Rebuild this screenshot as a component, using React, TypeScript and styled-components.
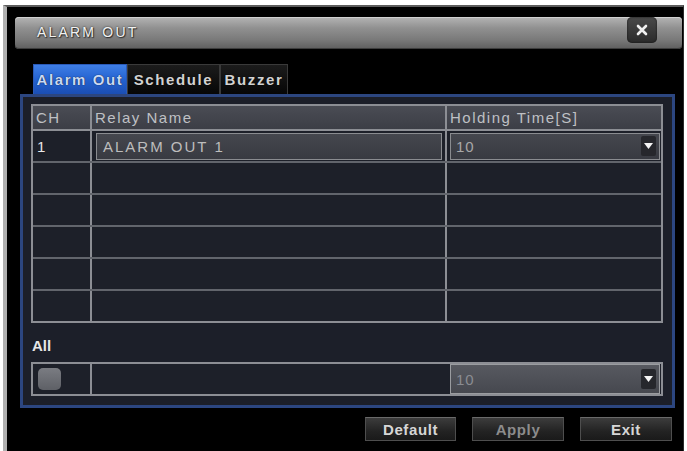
import React from "react";
import styled, { createGlobalStyle } from "styled-components";

const Global = createGlobalStyle`
  html, body { margin: 0; padding: 0; background: #ffffff; }
  body { width: 687px; height: 451px; overflow: hidden; font-family: "Liberation Sans", Arial, sans-serif; }
  * { box-sizing: border-box; }
`;

const Page = styled.div`
  width: 687px;
  height: 451px;
  padding: 5px 3px 0 3px;
`;

const Window = styled.div`
  height: 446px;
  background: #000;
  border-top: 2px solid #5c5c5c;
  border-left: 4px solid #b0b0b0;
  border-right: 1px solid #2a2a2a;
  padding: 10px 1px 0 8px;
  display: flex;
  flex-direction: column;
`;

const TitleBar = styled.div`
  height: 32px;
  border-radius: 4px;
  display: flex;
  align-items: center;
  padding-left: 22px;
  background: linear-gradient(#b4b4b4 0%, #909090 35%, #7a7a7a 70%, #5e5e5e 100%);
  box-shadow: inset 0 1px 0 #d0d0d0, inset 0 -1px 0 #3c3c3c;
`;

const Title = styled.span`
  font-size: 14px;
  letter-spacing: 2.2px;
  color: #f2f2f2;
  text-shadow: 0 0 2px #222, 1px 1px 1px #333;
  margin-top: -3px;
`;

const CloseButton = styled.div`
  margin-left: auto;
  margin-right: 25px;
  align-self: flex-start;
  margin-top: 0px;
  width: 30px;
  height: 26px;
  border-radius: 5px;
  background: linear-gradient(#4a4a4a, #2a2a2a);
  display: flex;
  align-items: center;
  justify-content: center;
  box-shadow: inset 0 0 2px #111;
`;

const Body = styled.div`
  margin-top: 15px;
  padding: 0 7px 0 5px;
  display: flex;
  flex-direction: column;
`;

const Tabs = styled.div`
  display: flex;
  margin-left: 13px;
  height: 30px;
`;

const Tab = styled.div<{ $w: number; $active?: boolean }>`
  width: ${(p) => p.$w}px;
  height: 30px;
  display: flex;
  align-items: center;
  justify-content: center;
  font-size: 15px;
  font-weight: bold;
  letter-spacing: 1.6px;
  color: ${(p) => (p.$active ? "#c9d9f6" : "#d2d2d2")};
  background: ${(p) =>
    p.$active
      ? "linear-gradient(#3f7fe6 0%, #2462d0 50%, #1b4eb4 100%)"
      : "linear-gradient(#1c1c1c, #060606)"};
  border: 1px solid ${(p) => (p.$active ? "#2a5ab8" : "#3a3a3a")};
  border-bottom: none;
  text-shadow: 0 0 1px #000;
`;

const Panel = styled.div`
  height: 314px;
  border: 3px solid #2c4680;
  background: #1c1f29;
  padding: 7px 9px 0 8px;
  display: flex;
  flex-direction: column;
`;

const Table = styled.div`
  border: 2px solid #8c8e94;
  display: flex;
  flex-direction: column;
`;

const Row = styled.div<{ $h: number; $head?: boolean; $last?: boolean }>`
  display: flex;
  height: ${(p) => p.$h + (p.$last ? 0 : 2)}px;
  border-bottom: ${(p) => (p.$last ? "none" : p.$head ? "2px solid #8c8e94" : "2px solid #62656c")};
  background: ${(p) => (p.$head ? "linear-gradient(#4a4c54, #3c3e46)" : "#1d2029")};
`;

const Cell = styled.div<{ $w?: number; $divider?: boolean }>`
  ${(p) => (p.$w ? `width: ${p.$w}px; flex: none;` : "flex: 1;")}
  border-right: ${(p) => (p.$divider ? "2px solid #8c8e94" : "none")};
  display: flex;
  align-items: center;
  padding-left: 3px;
  font-size: 15px;
  letter-spacing: 1.4px;
  color: #c4c4c4;
  min-width: 0;
`;

const HeadText = styled.span`
  color: #bfc0c4;
  letter-spacing: 1.5px;
`;

const CellText = styled.span`
  color: #e8e8e8;
  padding-left: 1px;
`;

const NameInput = styled.div`
  flex: 1;
  height: 27px;
  margin: 0 3px 0 1px;
  border: 1px solid #8a8c90;
  background: linear-gradient(#45474e, #383a41);
  display: flex;
  align-items: center;
  padding-left: 6px;
  font-size: 15px;
  letter-spacing: 2px;
  color: #bdbdbd;
`;

const Select = styled.div<{ $dim?: boolean }>`
  flex: 1;
  height: ${(p) => (p.$dim ? 30 : 27)}px;
  margin: 0 1px 0 0;
  border: 1px solid ${(p) => (p.$dim ? "#9a9ca0" : "#8a8c90")};
  background: ${(p) => (p.$dim ? "linear-gradient(#575960, #46484f)" : "linear-gradient(#45474e, #383a41)")};
  display: flex;
  align-items: center;
  padding-left: 5px;
  padding-right: 3px;
  font-size: 15px;
  letter-spacing: 1px;
  color: ${(p) => (p.$dim ? "#8a8c92" : "#a8a8a8")};
`;

const Arrow = styled.div`
  margin-left: auto;
  width: 15px;
  height: 20px;
  border-radius: 2px;
  background: #26272c;
  display: flex;
  align-items: center;
  justify-content: center;
`;

const AllLabel = styled.div`
  height: 39px;
  display: flex;
  align-items: center;
  padding-left: 1px;
  padding-top: 6px;
  font-size: 15px;
  font-weight: bold;
  color: #e6e6e6;
`;

const AllTable = styled.div`
  border: 2px solid #8c8e94;
  height: 34px;
  display: flex;
  background: #1d2029;
`;

const CheckBox = styled.div`
  width: 23px;
  height: 22px;
  border-radius: 5px;
  margin-left: 2px;
  background: linear-gradient(#7a7c82, #5e6066);
`;

const ButtonRow = styled.div`
  margin-top: 9px;
  display: flex;
  justify-content: flex-end;
  gap: 16px;
  padding-right: 3px;
`;

const Button = styled.div<{ $w: number; $disabled?: boolean }>`
  width: ${(p) => p.$w}px;
  height: 24px;
  display: flex;
  align-items: center;
  justify-content: center;
  font-size: 15px;
  font-weight: bold;
  letter-spacing: 0.6px;
  color: ${(p) => (p.$disabled ? "#8c8c8c" : "#d6d6d6")};
  background: linear-gradient(#3c3c3c, #232323 60%, #1a1a1a);
  border: 1px solid #4e4e4e;
  border-top-color: #6a6a6a;
`;

const DownArrow = () => (
  <svg width="9" height="6" viewBox="0 0 9 6">
    <path d="M0 0 H9 L4.5 6 Z" fill="#f4f4f4" />
  </svg>
);

const emptyRows = [0, 1, 2, 3, 4];

export default function App() {
  return (
    <>
      <Global />
      <Page>
        <Window>
          <TitleBar>
            <Title>ALARM OUT</Title>
            <CloseButton>
              <svg width="12" height="12" viewBox="0 0 12 12">
                <path d="M2 2 L10 10 M10 2 L2 10" stroke="#f0f0f0" strokeWidth="2.6" strokeLinecap="round" />
              </svg>
            </CloseButton>
          </TitleBar>
          <Body>
            <Tabs>
              <Tab $w={94} $active>
                Alarm Out
              </Tab>
              <Tab $w={93}>Schedule</Tab>
              <Tab $w={68}>Buzzer</Tab>
            </Tabs>
            <Panel>
              <Table>
                <Row $h={23} $head>
                  <Cell $w={59} $divider>
                    <HeadText>CH</HeadText>
                  </Cell>
                  <Cell $w={355} $divider>
                    <HeadText>Relay Name</HeadText>
                  </Cell>
                  <Cell>
                    <HeadText>Holding Time[S]</HeadText>
                  </Cell>
                </Row>
                <Row $h={30}>
                  <Cell $w={59} $divider>
                    <CellText>1</CellText>
                  </Cell>
                  <Cell $w={355} $divider>
                    <NameInput>ALARM OUT 1</NameInput>
                  </Cell>
                  <Cell>
                    <Select>
                      10
                      <Arrow>
                        <DownArrow />
                      </Arrow>
                    </Select>
                  </Cell>
                </Row>
                {emptyRows.map((i) => (
                  <Row key={i} $h={30} $last={i === emptyRows.length - 1}>
                    <Cell $w={59} $divider />
                    <Cell $w={355} $divider />
                    <Cell />
                  </Row>
                ))}
              </Table>
              <AllLabel>All</AllLabel>
              <AllTable>
                <Cell $w={59} $divider>
                  <CheckBox />
                </Cell>
                <Cell $w={355} />
                <Cell>
                  <Select $dim>
                    10
                    <Arrow>
                      <DownArrow />
                    </Arrow>
                  </Select>
                </Cell>
              </AllTable>
            </Panel>
            <ButtonRow>
              <Button $w={91}>Default</Button>
              <Button $w={92} $disabled>
                Apply
              </Button>
              <Button $w={92}>Exit</Button>
            </ButtonRow>
          </Body>
        </Window>
      </Page>
    </>
  );
}
